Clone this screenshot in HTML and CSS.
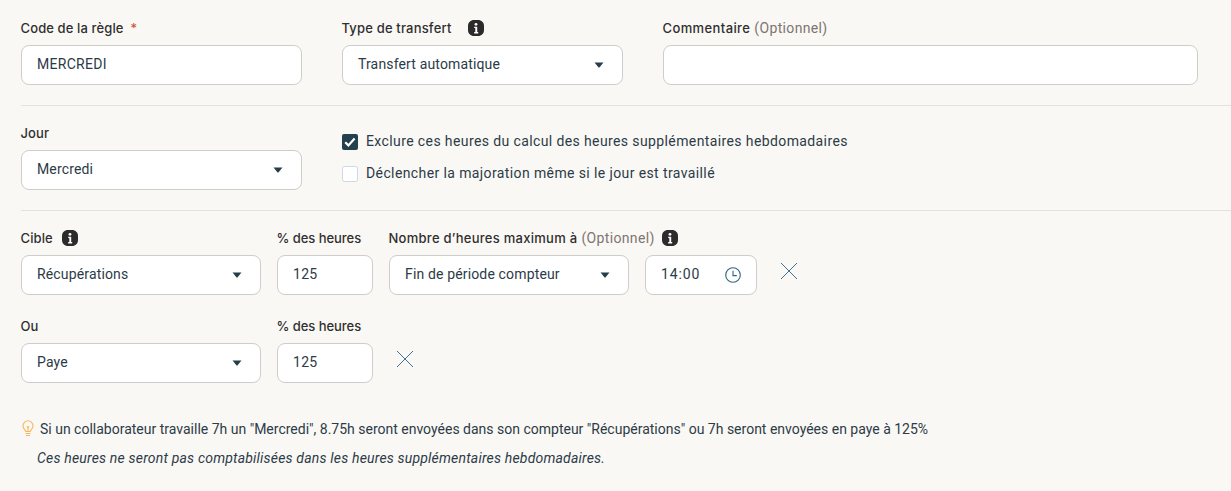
FILE: index.html
```html
<!DOCTYPE html>
<html lang="fr">
<head>
<meta charset="utf-8">
<title>Règle</title>
<link rel="stylesheet" href="styles.css">
</head>
<body>
<svg class="sprite" width="0" height="0">
  <symbol id="info" viewBox="0 0 16 16"><path fill="#2b2b2b" d="M6 0h4c3.5 0 6 2.5 6 6v4c0 3.5-2.500 6-6 6H6c-3.500 0-6-2.500-6-6V6c0-3.500 2.500-6 6-6z"/><circle cx="8" cy="4.300" r="1.400" fill="#fff"/><path fill="#fff" d="M6.200 6.800h3v5.300h1v1.300H6.200v-1.300h1.100V8.100H6.200z"/></symbol>
  <symbol id="caret" viewBox="0 0 10 6"><path fill="#263d4a" d="M0.500 0.500h9L5.600 5.200a.8.8 0 0 1-1.200 0z"/></symbol>
  <symbol id="close" viewBox="0 0 18 18"><path fill="none" stroke="#3f7396" stroke-width="1" d="M1 1l16 16M17 1L1 17"/></symbol>
</svg>
<main class="form">
  <section class="row row-first">
    <div class="field w281">
      <div class="label">Code de la règle <span class="req">*</span></div>
      <div class="box wide">MERCREDI</div>
    </div>
    <div class="field w281">
      <div class="label label-type">Type de transfert <svg class="info info-wide"><use href="#info"/></svg></div>
      <div class="box">Transfert automatique<svg class="caret"><use href="#caret"/></svg></div>
    </div>
    <div class="field w535">
      <div class="label label-comment">Commentaire <span class="opt">(Optionnel)</span></div>
      <div class="box"></div>
    </div>
  </section>
  <hr class="divider">
  <section class="row row-second">
    <div class="field w281">
      <div class="label">Jour</div>
      <div class="box">Mercredi<svg class="caret"><use href="#caret"/></svg></div>
    </div>
    <div class="checks">
      <div class="check">
        <svg class="checkbox" viewBox="0 0 16 16"><rect width="16" height="16" rx="2" fill="#25404d"/><path d="M3.200 8.200l3.200 3.200 6.200-7" fill="none" stroke="#fff" stroke-width="2.200"/></svg>
        <span>Exclure ces heures du calcul des heures supplémentaires hebdomadaires</span>
      </div>
      <div class="check">
        <svg class="checkbox" viewBox="0 0 16 16"><rect x=".5" y=".5" width="15" height="15" rx="2" fill="#fff" stroke="#ccd8e6"/></svg>
        <span>Déclencher la majoration même si le jour est travaillé</span>
      </div>
    </div>
  </section>
  <hr class="divider">
  <section class="row row-tight row-third">
    <div class="field w240">
      <div class="label">Cible <svg class="info"><use href="#info"/></svg></div>
      <div class="box">Récupérations<svg class="caret"><use href="#caret"/></svg></div>
    </div>
    <div class="field w96">
      <div class="label pct">% des heures</div>
      <div class="box wide">125</div>
    </div>
    <div class="field w240">
      <div class="label label-max">Nombre d’heures maximum à <span class="opt">(Optionnel)</span> <svg class="info info-tight"><use href="#info"/></svg></div>
      <div class="box">Fin de période compteur<svg class="caret"><use href="#caret"/></svg></div>
    </div>
    <div class="field w112">
      <div class="label">&nbsp;</div>
      <div class="box time">14:00
        <svg class="clock" viewBox="0 0 16 16"><circle cx="8" cy="8" r="7.300" fill="none" stroke="#2f6384" stroke-width="1.100"/><path d="M8 3.800V8.600H11.800" fill="none" stroke="#2f6384" stroke-width="1.100"/></svg>
      </div>
    </div>
    <svg class="close"><use href="#close"/></svg>
  </section>
  <section class="row row-tight row-fourth">
    <div class="field w240">
      <div class="label">Ou</div>
      <div class="box">Paye<svg class="caret"><use href="#caret"/></svg></div>
    </div>
    <div class="field w96">
      <div class="label pct">% des heures</div>
      <div class="box wide">125</div>
    </div>
    <svg class="close"><use href="#close"/></svg>
  </section>
  <div class="hint">
    <svg class="bulb" viewBox="0 0 14 17"><path fill="none" stroke="#f7b55c" stroke-width="1.100" d="M4.800 11.500C4.600 9.800 2 8.800 2 5.800a5 5 0 0 1 10 0c0 3-2.600 4-2.800 5.700zM4.500 13.500h5M5 15.500h4M7 11V7.500M5.800 6.500 7 7.500l1.200-1"/></svg>
    <span>Si un collaborateur travaille 7h un "Mercredi", 8.75h seront envoyées dans son compteur "Récupérations" ou 7h seront envoyées en paye à 125%</span>
  </div>
  <p class="note">Ces heures ne seront pas comptabilisées dans les heures supplémentaires hebdomadaires.</p>
</main>
</body>
</html>
```

FILE: styles.css
```css
* { box-sizing: border-box; }
html, body { margin: 0; padding: 0; }
body {
  width: 1231px;
  height: 491px;
  overflow: hidden;
  background: #faf8f5;
  font-family: Roboto, sans-serif;
  font-size: 14px;
  color: #2c3b47;
  letter-spacing: 0.15px;
}
.sprite { position: absolute; }
.form { padding: 20px 0 0 21px; }
.row { display: flex; gap: 40px; align-items: flex-start; }
.row-tight { gap: 16px; }
.row-fourth { margin-top: 23px; }
.field { flex: none; }
.w281 { width: 281px; }
.w535 { width: 535px; }
.w240 { width: 240px; }
.w96 { width: 96px; }
.w112 { width: 112px; }
.label {
  display: flex;
  align-items: center;
  height: 16px;
  margin-bottom: 9px;
  margin-left: -0.5px;
  font-family: Inter, sans-serif;
  font-size: 13px;
  font-weight: 500;
  letter-spacing: 0.12px;
  color: #2f2f2f;
  white-space: nowrap;
}
.label-type { letter-spacing: 0.18px; }
.label-comment { letter-spacing: 0.39px; }
.label-max { letter-spacing: 0.27px; }
.pct { letter-spacing: -0.05px; margin-left: -0.5px; }
.req { color: #c8502d; margin-left: 7px; font-weight: 400; }
.opt {
  margin-left: 4px;
  font-family: Roboto, sans-serif;
  font-size: 14px;
  font-weight: 400;
  letter-spacing: 0.35px;
  color: #7d7570;
}
.box {
  position: relative;
  height: 40px;
  display: flex;
  align-items: center;
  padding: 0 15px 2px;
  background: #fff;
  border: 1px solid #cfcdcb;
  border-radius: 8px;
  white-space: nowrap;
}
.wide { letter-spacing: 0.3px; }
.time { letter-spacing: 0.9px; }
.caret { position: absolute; right: 18px; top: 16px; width: 10px; height: 6px; }
.info { width: 16px; height: 16px; margin-left: 9px; flex: none; }
.info-wide { margin-left: 17px; }
.info-tight { margin-left: 7px; }
.clock { position: absolute; right: 15px; top: 11px; width: 16px; height: 16px; }
.close { flex: none; width: 18px; height: 18px; margin-top: 32px; margin-left: 6.5px; }
.divider { border: 0; border-top: 1px solid #e4e2df; height: 1px; margin: 20px 0 19px; }
.checks { display: flex; flex-direction: column; gap: 16px; padding-top: 9px; letter-spacing: 0.39px; }
.check { display: flex; align-items: center; gap: 8px; height: 16px; }
.check span { margin-top: -2px; }
.checkbox { width: 16px; height: 16px; flex: none; }
.hint { display: flex; align-items: center; gap: 5px; margin-top: 37px; height: 18px; letter-spacing: 0; }
.bulb { width: 14px; height: 17px; flex: none; margin-top: -2px; }
.note { margin: 11px 0 0 16px; font-style: italic; line-height: 18px; letter-spacing: 0.19px; }
```
